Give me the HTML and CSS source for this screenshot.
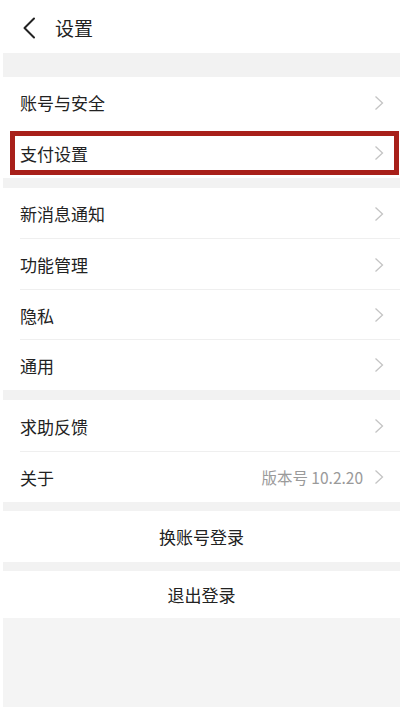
FILE: index.html
```html
<!DOCTYPE html>
<html lang="zh-CN">
<head>
<meta charset="utf-8">
<title>设置</title>
<link rel="stylesheet" href="styles.css">
</head>
<body>
<div class="page">
  <header class="topbar">
    <svg class="back" width="14" height="22" viewBox="0 0 14 22"><path d="M12 1.5 L2.5 11 L12 20.5" fill="none" stroke="#222" stroke-width="2" stroke-linecap="round" stroke-linejoin="round"/></svg>
    <span class="title">设置</span>
  </header>
  <div class="band band-top"></div>
  <section class="group">
    <div class="row r51"><span class="label">账号与安全</span><svg class="chev" width="10" height="16" viewBox="0 0 10 16"><path d="M1.5 1.5 L8.5 8 L1.5 14.5" fill="none" stroke="#c4c4c4" stroke-width="1.3"/></svg></div>
    <div class="row r50 highlighted"><span class="label">支付设置</span><svg class="chev" width="10" height="16" viewBox="0 0 10 16"><path d="M1.5 1.5 L8.5 8 L1.5 14.5" fill="none" stroke="#c4c4c4" stroke-width="1.3"/></svg><span class="mark"></span></div>
  </section>
  <div class="band band-10"></div>
  <section class="group">
    <div class="row r51 divided"><span class="label">新消息通知</span><svg class="chev" width="10" height="16" viewBox="0 0 10 16"><path d="M1.5 1.5 L8.5 8 L1.5 14.5" fill="none" stroke="#c4c4c4" stroke-width="1.3"/></svg></div>
    <div class="row r51 divided"><span class="label">功能管理</span><svg class="chev" width="10" height="16" viewBox="0 0 10 16"><path d="M1.5 1.5 L8.5 8 L1.5 14.5" fill="none" stroke="#c4c4c4" stroke-width="1.3"/></svg></div>
    <div class="row r50 divided"><span class="label">隐私</span><svg class="chev" width="10" height="16" viewBox="0 0 10 16"><path d="M1.5 1.5 L8.5 8 L1.5 14.5" fill="none" stroke="#c4c4c4" stroke-width="1.3"/></svg></div>
    <div class="row r50"><span class="label">通用</span><svg class="chev" width="10" height="16" viewBox="0 0 10 16"><path d="M1.5 1.5 L8.5 8 L1.5 14.5" fill="none" stroke="#c4c4c4" stroke-width="1.3"/></svg></div>
  </section>
  <div class="band band-10"></div>
  <section class="group">
    <div class="row r52 divided"><span class="label">求助反馈</span><svg class="chev" width="10" height="16" viewBox="0 0 10 16"><path d="M1.5 1.5 L8.5 8 L1.5 14.5" fill="none" stroke="#c4c4c4" stroke-width="1.3"/></svg></div>
    <div class="row r50"><span class="label">关于</span><span class="value">版本号 10.2.20</span><svg class="chev" width="10" height="16" viewBox="0 0 10 16"><path d="M1.5 1.5 L8.5 8 L1.5 14.5" fill="none" stroke="#c4c4c4" stroke-width="1.3"/></svg></div>
  </section>
  <div class="band band-9"></div>
  <div class="button b51">换账号登录</div>
  <div class="band band-9"></div>
  <div class="button b47">退出登录</div>
  <div class="bottom"></div>
</div>
</body>
</html>
```
FILE: styles.css
```css
html, body {
  margin: 0;
  padding: 0;
  background: #ffffff;
}
body {
  font-family: "Noto Sans CJK SC", "Noto Sans", Roboto, sans-serif;
  color: #222222;
  width: 403px;
  height: 707px;
  overflow: hidden;
}
.page {
  display: flex;
  flex-direction: column;
  height: 707px;
  padding: 0 3px;
  box-sizing: border-box;
}
.topbar {
  height: 53px;
  display: flex;
  align-items: center;
  padding-left: 19px;
  background: #fff;
}
.back {
  display: block;
  margin-top: 2px;
}
.title {
  font-size: 19px;
  margin-left: 19px;
  margin-top: 1px;
  color: #222;
}
.band {
  background: #f2f2f2;
}
.band-top { height: 24px; }
.band-10 { height: 10px; }
.band-9 { height: 9px; }
.group {
  background: #fff;
  display: flex;
  flex-direction: column;
}
.row {
  position: relative;
  display: flex;
  align-items: center;
  padding: 0 16px 0 17px;
}
.r50 { height: 50px; }
.r51 { height: 51px; }
.r52 { height: 52px; }
.row.divided::after {
  content: "";
  position: absolute;
  left: 17px;
  right: 0;
  bottom: 0;
  height: 1px;
  background: #efefef;
}
.label {
  font-size: 17px;
  flex: 1;
  color: #222;
}
.value {
  font-size: 15.5px;
  color: #9a9a9a;
  margin-right: 11px;
}
.chev {
  display: block;
  flex: none;
}
.mark {
  position: absolute;
  left: 7px;
  right: 1px;
  top: 3px;
  bottom: 3px;
  border: 5px solid #a8201a;
  pointer-events: none;
}
.button {
  background: #fff;
  display: flex;
  align-items: center;
  justify-content: center;
  font-size: 17px;
  color: #222;
}
.b51 { height: 51px; }
.b47 { height: 47px; }
.bottom {
  flex: 1;
  background: #f4f4f4;
}
```
